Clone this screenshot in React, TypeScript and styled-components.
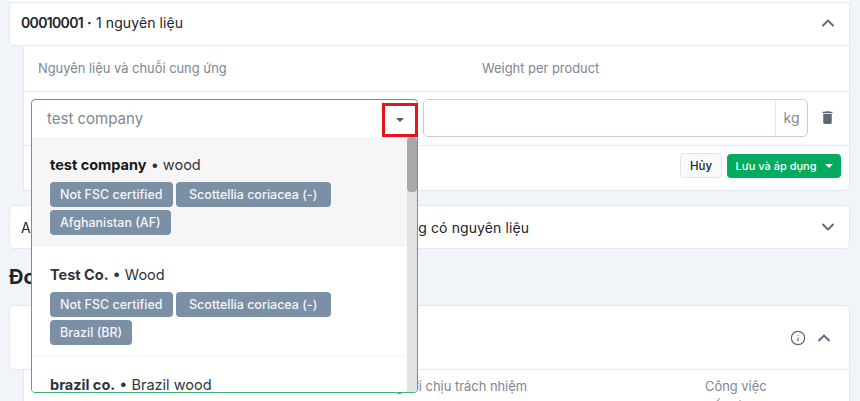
import { ChevronDown, ChevronUp, Info } from "lucide-react";
import { MdDelete } from "react-icons/md";
import styled, { createGlobalStyle } from "styled-components";

const GlobalStyle = createGlobalStyle`
  html, body {
    margin: 0;
    height: 401px;
    overflow: hidden;
    background: #f1f4f8;
    font-family: Inter, "Noto Sans", sans-serif;
    color: #20232a;
  }
  * {
    box-sizing: border-box;
  }
`;

const Page = styled.div`
  height: 401px;
  overflow: hidden;
  padding: 0 10px 0 9px;
`;

const PreviousCardEdge = styled.div`
  height: 2px;
  background: white;
`;

const Card = styled.div`
  background: white;
  border: 1px solid #e4e8ee;
  border-radius: 5px;
`;

const TopCard = styled(Card)`
  border-radius: 0 0 0 5px;
`;

const CardHeader = styled.div<{ $height: number; $inset?: number; $lift?: number }>`
  height: ${(p) => p.$height}px;
  display: flex;
  align-items: center;
  justify-content: space-between;
  padding: 0 ${(p) => p.$inset ?? 11}px ${(p) => p.$lift ?? 0}px 11px;
  font-size: 14px;
  letter-spacing: 0.1px;
`;

const Code = styled.span`
  font-weight: 600;
  letter-spacing: -0.65px;
`;

const HeaderIcons = styled.div`
  display: flex;
  align-items: center;
  gap: 8px;
  color: #5d6b7e;
`;

const SubPanel = styled.div`
  margin-left: 14px;
  background: white;
  border-left: 1px solid #e4e8ee;
  border-right: 1px solid #e4e8ee;
  border-bottom: 1px solid #e4e8ee;
  border-radius: 0 0 5px 0;
`;

const ColumnRow = styled.div`
  height: 46px;
  display: grid;
  grid-template-columns: 444px 1fr;
  align-items: center;
  padding-left: 14px;
  font-size: 12.9px;
  color: #7d8794;
  border-bottom: 1px solid #e4e8ee;
`;

const InputRow = styled.div`
  height: 54px;
  display: flex;
  align-items: center;
  gap: 5px;
  padding: 0 0 2px 7px;
  border-bottom: 1px solid #e4e8ee;
`;

const SelectSlot = styled.div`
  position: relative;
  width: 387px;
  height: 38px;
  flex: none;
`;

const Select = styled.div`
  position: absolute;
  z-index: 5;
  top: 0;
  left: 0;
  width: 387px;
  height: 294px;
  display: flex;
  flex-direction: column;
  background: white;
  border: 1px solid #3cb371;
  border-radius: 4px;
  overflow: hidden;
`;

const SelectValue = styled.div`
  height: 37px;
  flex: none;
  display: flex;
  align-items: center;
  padding-left: 15px;
  font-size: 15px;
  color: #808890;
`;

const Caret = styled.span<{ $color: string }>`
  display: block;
  width: 0;
  height: 0;
  border-left: 4px solid transparent;
  border-right: 4px solid transparent;
  border-top: 4px solid ${(p) => p.$color};
`;

const CaretBox = styled.div`
  position: absolute;
  z-index: 6;
  top: 4px;
  right: 0;
  width: 36px;
  height: 34px;
  display: flex;
  align-items: center;
  justify-content: center;
  border: 3px solid #e6141e;
`;

const Menu = styled.div`
  flex: 1;
  min-height: 0;
  overflow: hidden;
  position: relative;
  padding-right: 10px;
`;

const ScrollTrack = styled.div`
  position: absolute;
  top: 0;
  right: 0;
  bottom: 0;
  width: 10px;
  background: #e2e2e2;
`;

const ScrollThumb = styled.div`
  height: 55px;
  background: #a8a8a8;
  border-radius: 4px;
`;

const Option = styled.div<{ $active?: boolean }>`
  height: 110px;
  padding: 18px 18px 0;
  background: ${(p) => (p.$active ? "#f6f6f6" : "white")};
  border-bottom: 1px solid #f5f5f5;
`;

const OptionTitle = styled.div`
  font-size: 14.5px;
  line-height: 20px;
  color: #30333a;
`;

const OptionCompany = styled.span<{ $dark?: boolean }>`
  font-weight: 700;
  color: ${(p) => (p.$dark ? "#16181d" : "#30333a")};
`;

const Tags = styled.div`
  display: flex;
  flex-wrap: wrap;
  gap: 3px;
  margin-top: 7px;
`;

const Tag = styled.span<{ $wide?: boolean }>`
  height: 25px;
  display: inline-flex;
  align-items: center;
  padding: 0 ${(p) => (p.$wide ? 13.5 : 10)}px;
  border-radius: 4px;
  background: #7b8fa5;
  color: #f4f6f8;
  font-size: 12.5px;
  font-weight: 500;
`;

const WeightGroup = styled.div`
  width: 385px;
  height: 38px;
  flex: none;
  display: flex;
  border: 1px solid #c5ccd6;
  border-radius: 5px;
  overflow: hidden;
`;

const WeightInput = styled.input`
  flex: 1;
  min-width: 0;
  border: 0;
  outline: 0;
`;

const Unit = styled.div`
  width: 32px;
  display: flex;
  align-items: center;
  justify-content: center;
  border-left: 1px solid #e4e8ee;
  font-size: 14px;
  color: #808890;
`;

const DeleteButton = styled.div`
  margin-left: 6px;
  display: flex;
  color: #5f6677;
`;

const Footer = styled.div`
  height: 44px;
  display: flex;
  align-items: center;
  justify-content: flex-end;
  gap: 5px;
  padding: 0 8px 5px 0;
`;

const CancelButton = styled.button`
  width: 42px;
  height: 25px;
  padding: 0;
  border: 1px solid #e0e4ea;
  border-radius: 4px;
  background: #f8f9fb;
  color: #20232a;
  font: 500 11.5px Inter, sans-serif;
`;

const ApplyButton = styled.button`
  width: 114px;
  height: 24px;
  padding: 0;
  display: flex;
  align-items: center;
  justify-content: center;
  gap: 8px;
  border: 0;
  border-radius: 4px;
  background: #02ab5e;
  color: white;
  font: 500 11px Inter, sans-serif;
`;

const SectionTitle = styled.h2`
  margin: 14px 0;
  height: 28px;
  line-height: 28px;
  font-size: 20px;
  font-weight: 700;
  color: #20232a;
`;

const CollapsedCard = styled(Card)`
  margin-top: 14px;
`;

const ColumnsBelow = styled.div`
  margin-left: 14px;
  height: 40px;
  display: grid;
  grid-template-columns: 362px 319px 1fr;
  padding-top: 7px;
  background: white;
  border-left: 1px solid #e4e8ee;
  border-right: 1px solid #e4e8ee;
  font-size: 12.9px;
  line-height: 20px;
  color: #7d8794;
`;

type Supplier = {
  company: string;
  material: string;
  country: string;
  active?: boolean;
};

const suppliers: Supplier[] = [
  { company: "test company", material: "wood", country: "Afghanistan (AF)", active: true },
  { company: "Test Co.", material: "Wood", country: "Brazil (BR)" },
  { company: "brazil co.", material: "Brazil wood", country: "Brazil (BR)" },
];

export default function App() {
  return (
    <Page>
      <GlobalStyle />
      <PreviousCardEdge />
      <TopCard>
        <CardHeader $height={42} $lift={3}>
          <span>
            <Code>00010001</Code> <b>·</b> 1 nguyên liệu
          </span>
          <HeaderIcons>
            <ChevronUp size={20} strokeWidth={2.3} />
          </HeaderIcons>
        </CardHeader>
      </TopCard>
      <SubPanel>
        <ColumnRow>
          <span>Nguyên liệu và chuỗi cung ứng</span>
          <span>Weight per product</span>
        </ColumnRow>
        <InputRow>
          <SelectSlot>
            <Select>
              <SelectValue>test company</SelectValue>
              <Menu>
                {suppliers.map((s) => (
                  <Option key={s.company} $active={s.active}>
                    <OptionTitle>
                      <OptionCompany $dark={s.active}>{s.company}</OptionCompany> • {s.material}
                    </OptionTitle>
                    <Tags>
                      <Tag>Not FSC certified</Tag>
                      <Tag $wide>Scottellia coriacea (-)</Tag>
                      <Tag>{s.country}</Tag>
                    </Tags>
                  </Option>
                ))}
                <ScrollTrack>
                  <ScrollThumb />
                </ScrollTrack>
              </Menu>
            </Select>
            <CaretBox>
              <Caret $color="#555" />
            </CaretBox>
          </SelectSlot>
          <WeightGroup>
            <WeightInput />
            <Unit>kg</Unit>
          </WeightGroup>
          <DeleteButton>
            <MdDelete size={17} />
          </DeleteButton>
        </InputRow>
        <Footer>
          <CancelButton>Hủy</CancelButton>
          <ApplyButton>
            Lưu và áp dụng
            <Caret $color="white" />
          </ApplyButton>
        </Footer>
      </SubPanel>
      <CollapsedCard>
        <CardHeader $height={42}>
          <span>Applied cho tất cả các sản phẩm trong danh sách này không có nguyên liệu</span>
          <HeaderIcons>
            <ChevronDown size={20} strokeWidth={2.3} />
          </HeaderIcons>
        </CardHeader>
      </CollapsedCard>
      <SectionTitle>Đơn vị chịu trách nhiệm</SectionTitle>
      <Card>
        <CardHeader $height={63} $inset={15}>
          <span />
          <HeaderIcons>
            <Info size={16} strokeWidth={1.8} />
            <ChevronUp size={20} strokeWidth={2.3} />
          </HeaderIcons>
        </CardHeader>
      </Card>
      <ColumnsBelow>
        <span />
        <span>Người chịu trách nhiệm</span>
        <span>
          Công việc
          <br />
          Đầu từ
        </span>
      </ColumnsBelow>
    </Page>
  );
}
